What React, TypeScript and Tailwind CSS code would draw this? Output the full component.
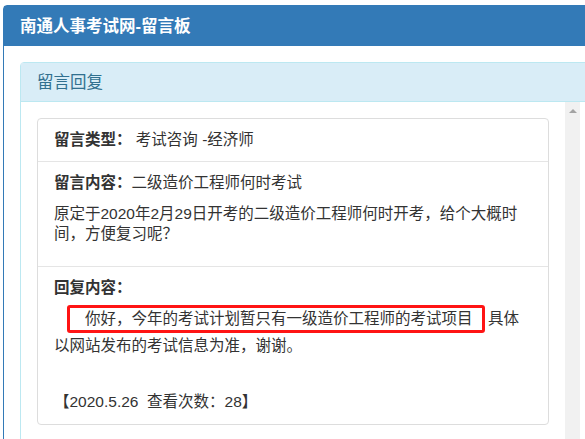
const FONT = '"Liberation Sans", "Noto Sans CJK SC", sans-serif';

export default function App() {
  return (
    <div className="h-[439px] w-[585px] overflow-hidden bg-white pl-[3px] pt-[5px] text-[#333]" style={{ fontFamily: FONT }}>
      <div className="h-[460px] w-[620px] rounded-t-[4px] border border-[#337ab7]">
        <div className="flex h-[40px] items-center bg-[#337ab7] px-[16px] text-[16.5px] font-bold text-white">
          南通人事考试网-留言板
        </div>
        <div className="pl-[16px] pt-[16px]">
          <div className="h-[400px] w-[620px] rounded-t-[4px] border border-[#bce8f1]">
            <div className="flex h-[39px] items-center border-b border-[#bce8f1] bg-[#d9edf7] px-[16px] text-[16.5px] text-[#31708f]">
              留言回复
            </div>
            <div className="flex">
              <div className="w-[544px] px-[16px] pt-[16px]">
                <div className="rounded-[4px] border border-[#ddd] text-[15.5px]">
                  <div className="px-[16px] py-[10px] leading-[22px]">
                    <span className="font-bold">留言类型：</span> 考试咨询 -经济师
                  </div>
                  <div className="border-t border-[#e5e5e5] px-[16px] pb-[22px] pt-[10px]">
                    <div className="leading-[22px]">
                      <span className="font-bold">留言内容：</span>二级造价工程师何时考试
                    </div>
                    <p className="mt-[10px] leading-[20px]">
                      原定于2020年2月29日开考的二级造价工程师何时开考，给个大概时间，方便复习呢？
                    </p>
                  </div>
                  <div className="relative border-t border-[#e5e5e5] px-[16px] pb-[11px] pt-[10px]">
                    <div className="font-bold leading-[22px]">回复内容：</div>
                    <p className="mt-[6px] leading-[27px]">
                      {'\u3000\u3000你好，今年的考试计划暂只有一级造价工程师的考试项目\u3000具体以网站发布的考试信息为准，谢谢。'}
                    </p>
                    <div className="absolute left-[29px] top-[38px] h-[28px] w-[418px] rounded-[3px] border-[3px] border-[#ff1414]" />
                    <div className="mt-[32px] leading-[22px]">【2020.5.26&nbsp; 查看次数：28】</div>
                  </div>
                </div>
              </div>
              <div className="flex h-[340px] w-[15px] justify-center bg-[#f1f1f1] pt-[7px]">
                <div className="h-0 w-0 border-x-[4px] border-b-[4px] border-x-transparent border-b-[#a3a3a3]" />
              </div>
            </div>
          </div>
        </div>
      </div>
    </div>
  );
}
